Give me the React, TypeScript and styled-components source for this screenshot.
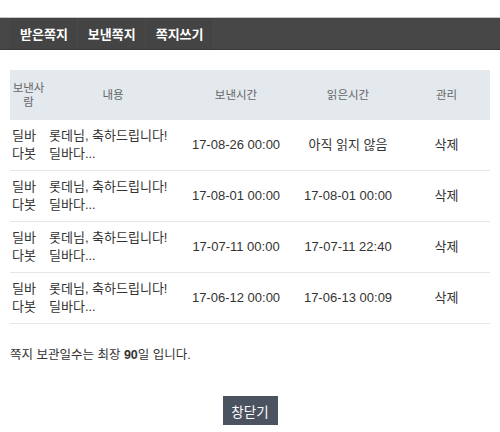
import styled, { createGlobalStyle } from 'styled-components'

const GlobalStyle = createGlobalStyle`
  body {
    margin: 0;
    background: #fff;
    font-family: "Liberation Sans", "Noto Sans CJK KR", sans-serif;
    color: #333;
  }
`

interface Message {
  sender: string
  content: string
  sentAt: string
  readAt: string
}

const messages: Message[] = [
  { sender: '딜바다봇', content: '롯데님, 축하드립니다! 딜바다...', sentAt: '17-08-26 00:00', readAt: '아직 읽지 않음' },
  { sender: '딜바다봇', content: '롯데님, 축하드립니다! 딜바다...', sentAt: '17-08-01 00:00', readAt: '17-08-01 00:00' },
  { sender: '딜바다봇', content: '롯데님, 축하드립니다! 딜바다...', sentAt: '17-07-11 00:00', readAt: '17-07-11 22:40' },
  { sender: '딜바다봇', content: '롯데님, 축하드립니다! 딜바다...', sentAt: '17-06-12 00:00', readAt: '17-06-13 00:09' },
]

const tabs = ['받은쪽지', '보낸쪽지', '쪽지쓰기']

const App = () => {
  return (
    <PageWrapper>
      <GlobalStyle />
      <NavBar>
        {tabs.map((tab) => (
          <NavTab key={tab}>{tab}</NavTab>
        ))}
      </NavBar>

      <Content>
        <MessageTable>
          <colgroup>
            <col style={{ width: 37 }} />
            <col style={{ width: 132 }} />
            <col style={{ width: 114 }} />
            <col style={{ width: 110 }} />
            <col />
          </colgroup>
          <thead>
            <tr>
              <HeadCell>보낸사람</HeadCell>
              <HeadCell>내용</HeadCell>
              <HeadCell>보낸시간</HeadCell>
              <HeadCell>읽은시간</HeadCell>
              <HeadCell>관리</HeadCell>
            </tr>
          </thead>
          <tbody>
            {messages.map((msg, i) => (
              <Row key={i}>
                <Cell $align="left" $breakAll>{msg.sender}</Cell>
                <Cell $align="left">{msg.content}</Cell>
                <Cell>{msg.sentAt}</Cell>
                <Cell>{msg.readAt}</Cell>
                <Cell>삭제</Cell>
              </Row>
            ))}
          </tbody>
        </MessageTable>

        <Notice>
          쪽지 보관일수는 최장 <strong>90</strong>일 입니다.
        </Notice>

        <ButtonRow>
          <CloseButton type="button">창닫기</CloseButton>
        </ButtonRow>
      </Content>
    </PageWrapper>
  )
}

const PageWrapper = styled.div`
  padding-top: 17px;
`

const NavBar = styled.nav`
  display: flex;
  height: 31px;
  padding: 0 10px;
  background: #474747;
  border-top: 1px solid #c8c8c8;
  border-bottom: 1px solid #3a3a3a;
`

const NavTab = styled.div`
  display: flex;
  align-items: center;
  padding: 0 9px 0 10px;
  background: #444;
  border-right: 1px solid #4a4a4a;
  color: #fff;
  font-size: 13px;
  font-weight: bold;
  cursor: pointer;
`

const Content = styled.div`
  padding: 20px 10px 0;
`

const MessageTable = styled.table`
  width: 100%;
  border-collapse: collapse;
  table-layout: fixed;
`

const HeadCell = styled.th`
  height: 50px;
  padding: 0 1px;
  background: #e3e9ed;
  color: #666;
  font-size: 11.5px;
  font-weight: normal;
  line-height: 14px;
  text-align: center;
  word-break: break-all;
`

const Row = styled.tr`
  border-bottom: 1px solid #e6e6e6;
`

const Cell = styled.td<{ $align?: 'left' | 'center'; $breakAll?: boolean }>`
  height: 50px;
  padding: 0 2px;
  font-size: 13px;
  line-height: 18px;
  color: #333;
  text-align: ${({ $align }) => $align || 'center'};
  word-break: ${({ $breakAll }) => ($breakAll ? 'break-all' : 'keep-all')};
`

const Notice = styled.p`
  margin: 20px 0 0;
  font-size: 12.5px;
  color: #333;

  strong {
    font-weight: bold;
  }
`

const ButtonRow = styled.div`
  display: flex;
  justify-content: center;
  margin-top: 33px;
`

const CloseButton = styled.button`
  width: 55px;
  height: 29px;
  border: 0;
  background: #4b5360;
  color: #fff;
  font-family: inherit;
  font-size: 13.5px;
`

export default App
